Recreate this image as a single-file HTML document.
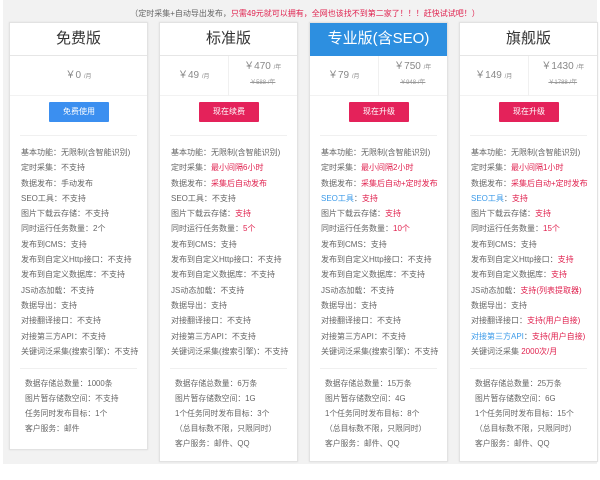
<!DOCTYPE html>
<html><head><meta charset="utf-8"><style>
*{margin:0;padding:0;box-sizing:border-box}
body{width:600px;height:480px;background:#fff;font-family:"Liberation Sans","Noto Sans CJK SC",sans-serif;position:relative;overflow:hidden;color:#666}
.bg{position:absolute;left:3px;top:0;width:594px;height:464px;background:#f2f2f2}
.note{position:absolute;top:8px;left:0;width:600px;text-align:center;font-size:8px;color:#666;padding-left:10px}
.r{color:#e0224f}.b{color:#3d9be9}
.card{position:absolute;top:22px;width:139px;background:#fff;border:1px solid #e2e2e2;box-shadow:0 0 2px rgba(0,0,0,.08)}
.hd{height:33px;line-height:32px;text-align:center;font-size:15px;color:#333;border-bottom:1px solid #e6e6e6}
.hd.blue{background:#2d8fe0;color:#fff;border-bottom:none}
.price{height:40px;position:relative;font-size:10px;color:#888;border-bottom:1px solid #f2f2f2}
.price small{font-size:6px}
.one{text-align:center;line-height:40px}
.l{position:absolute;left:0;width:50%;top:0;line-height:40px;text-align:center;border-right:1px solid #f0f0f0;height:40px}
.rt{position:absolute;left:50%;width:50%;top:5px;text-align:center;line-height:12px}
.rt s{display:block;font-size:6px;color:#999;margin-top:3px}
.btn{position:absolute;top:79px;left:39px;width:60px;height:20px;line-height:20px;text-align:center;color:#fff;font-size:8px;border-radius:1px}
.btn.bl{background:#3b8ff0}.btn.rd{background:#e4225a}
.hr1{position:absolute;top:112px;left:10px;right:10px;border-top:1px solid #f0f0f0}
.f{position:absolute;top:122px;left:11px;font-size:8px;line-height:15.3px;white-space:nowrap}
.hr2{position:absolute;top:345px;left:10px;right:10px;border-top:1px solid #f0f0f0}
.g{position:absolute;top:353px;left:15px;font-size:7.8px;line-height:15px;white-space:nowrap}
</style></head><body>
<div class="bg"></div>
<div class="note">（定时采集+自动导出发布，<span class="r">只需49元就可以拥有，全网也该找不到第二家了！！！赶快试试吧！）</span></div>

<div class="card" style="left:9px;height:428px">
<div class="hd">免费版</div>
<div class="price one">￥0 <small>/月</small></div>
<div class="btn bl">免费使用</div><div class="hr1"></div>
<div class="f">基本功能：无限制(含智能识别)<br>定时采集：不支持<br>数据发布：手动发布<br>SEO工具：不支持<br>图片下载云存储：不支持<br>同时运行任务数量：2个<br>发布到CMS：支持<br>发布到自定义Http接口：不支持<br>发布到自定义数据库：不支持<br>JS动态加载：不支持<br>数据导出：支持<br>对接翻译接口：不支持<br>对接第三方API：不支持<br>关键词泛采集(搜索引擎)：不支持</div>
<div class="hr2"></div>
<div class="g">数据存储总数量：1000条<br>图片暂存储数空间：不支持<br>任务同时发布目标：1个<br>客户服务：邮件</div>
</div>

<div class="card" style="left:159px;height:440px">
<div class="hd">标准版</div>
<div class="price"><div class="l">￥49 <small>/月</small></div><div class="rt">￥470 <small>/年</small><s>￥588 /年</s></div></div>
<div class="btn rd">现在续费</div><div class="hr1"></div>
<div class="f">基本功能：无限制(含智能识别)<br>定时采集：<span class="r">最小间隔6小时</span><br>数据发布：<span class="r">采集后自动发布</span><br>SEO工具：不支持<br>图片下载云存储：<span class="r">支持</span><br>同时运行任务数量：<span class="r">5个</span><br>发布到CMS：支持<br>发布到自定义Http接口：不支持<br>发布到自定义数据库：不支持<br>JS动态加载：不支持<br>数据导出：支持<br>对接翻译接口：不支持<br>对接第三方API：不支持<br>关键词泛采集(搜索引擎)：不支持</div>
<div class="hr2"></div>
<div class="g">数据存储总数量：6万条<br>图片暂存储数空间：1G<br>1个任务同时发布目标：3个<br>（总目标数不限，只限同时）<br>客户服务：邮件、QQ</div>
</div>

<div class="card" style="left:309px;height:440px">
<div class="hd blue">专业版(含SEO)</div>
<div class="price"><div class="l">￥79 <small>/月</small></div><div class="rt">￥750 <small>/年</small><s>￥948 /年</s></div></div>
<div class="btn rd">现在升级</div><div class="hr1"></div>
<div class="f">基本功能：无限制(含智能识别)<br>定时采集：<span class="r">最小间隔2小时</span><br>数据发布：<span class="r">采集后自动+定时发布</span><br><span class="b">SEO工具</span>：<span class="r">支持</span><br>图片下载云存储：<span class="r">支持</span><br>同时运行任务数量：<span class="r">10个</span><br>发布到CMS：支持<br>发布到自定义Http接口：不支持<br>发布到自定义数据库：不支持<br>JS动态加载：不支持<br>数据导出：支持<br>对接翻译接口：不支持<br>对接第三方API：不支持<br>关键词泛采集(搜索引擎)：不支持</div>
<div class="hr2"></div>
<div class="g">数据存储总数量：15万条<br>图片暂存储数空间：4G<br>1个任务同时发布目标：8个<br>（总目标数不限，只限同时）<br>客户服务：邮件、QQ</div>
</div>

<div class="card" style="left:459px;height:440px">
<div class="hd">旗舰版</div>
<div class="price"><div class="l">￥149 <small>/月</small></div><div class="rt">￥1430 <small>/年</small><s>￥1788 /年</s></div></div>
<div class="btn rd">现在升级</div><div class="hr1"></div>
<div class="f">基本功能：无限制(含智能识别)<br>定时采集：<span class="r">最小间隔1小时</span><br>数据发布：<span class="r">采集后自动+定时发布</span><br><span class="b">SEO工具</span>：<span class="r">支持</span><br>图片下载云存储：<span class="r">支持</span><br>同时运行任务数量：<span class="r">15个</span><br>发布到CMS：支持<br>发布到自定义Http接口：<span class="r">支持</span><br>发布到自定义数据库：<span class="r">支持</span><br>JS动态加载：<span class="r">支持(列表提取器)</span><br>数据导出：支持<br>对接翻译接口：<span class="r">支持(用户自接)</span><br><span class="b">对接第三方API</span>：<span class="r">支持(用户自接)</span><br>关键词泛采集 <span class="r">2000次/月</span></div>
<div class="hr2"></div>
<div class="g">数据存储总数量：25万条<br>图片暂存储数空间：6G<br>1个任务同时发布目标：15个<br>（总目标数不限，只限同时）<br>客户服务：邮件、QQ</div>
</div>
</body></html>
